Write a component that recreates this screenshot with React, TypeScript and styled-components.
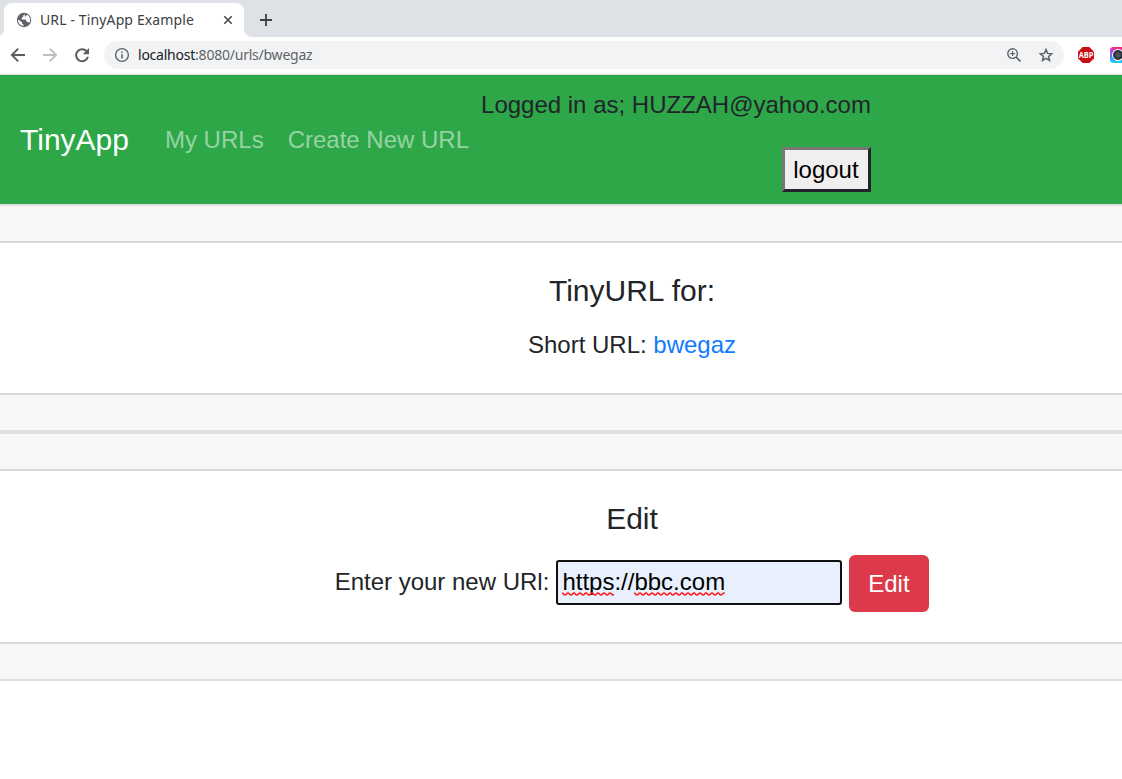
import React from 'react';
import styled, { createGlobalStyle } from 'styled-components';

const GlobalStyle = createGlobalStyle`
  *, *::before, *::after { box-sizing: border-box; }
  html, body { margin: 0; padding: 0; overflow: hidden; background: #fff; }
`;

const Window = styled.div`
  width: 1122px;
  height: 779px;
  overflow: hidden;
  background: #fff;
  color: #212529;
  font: 24px/36px "Liberation Sans", Arial, sans-serif;
`;

const chromeFont = '"Noto Sans", "Open Sans", sans-serif';

const TabStrip = styled.div`
  display: flex;
  height: 37px;
  padding: 3px 0 0 4px;
  background: #dee1e6;
`;

const Tab = styled.div`
  position: relative;
  display: flex;
  align-items: center;
  width: 240px;
  padding: 0 10px 0 12px;
  background: #fff;
  border-radius: 8px 8px 0 0;

  &::before, &::after {
    content: '';
    position: absolute;
    bottom: 0;
    width: 8px;
    height: 8px;
  }
  &::before {
    left: -8px;
    background: radial-gradient(circle at 0 0, transparent 7.5px, #fff 8.5px);
  }
  &::after {
    right: -8px;
    background: radial-gradient(circle at 100% 0, transparent 7.5px, #fff 8.5px);
  }
`;

const TabTitle = styled.span`
  flex: 1;
  margin-left: 8px;
  color: #3c4043;
  font: 14px/20px ${chromeFont};
  letter-spacing: 0.13px;
  white-space: nowrap;
`;

const NewTab = styled.div`
  display: flex;
  align-items: center;
  margin-left: 15px;
`;

const Toolbar = styled.div`
  display: flex;
  align-items: center;
  height: 38px;
  padding: 0 0 1px 10px;
  border-bottom: 1px solid #dadce0;
  background: #fff;
`;

const NavIcons = styled.div`
  display: flex;
  flex: none;
  gap: 16px;
  margin-right: 14px;
`;

const AddressBar = styled.div`
  display: flex;
  flex: none;
  align-items: center;
  width: 960px;
  height: 28px;
  padding: 0 10px;
  border-radius: 14px;
  background: #f1f3f4;
`;

const Address = styled.span`
  flex: 1;
  margin-left: 8px;
  color: #5f6368;
  font: 14px/20px ${chromeFont};
  letter-spacing: -0.23px;
`;

const Host = styled.span`
  color: #202124;
`;

const AddressActions = styled.div`
  display: flex;
  gap: 16px;
`;

const Extensions = styled.div`
  display: flex;
  flex: none;
  gap: 16px;
  margin-left: 14px;
`;

const Icon = styled.svg`
  display: block;
  flex: none;
`;

const Page = styled.div`
  width: 1264px;
`;

const Navbar = styled.nav`
  display: flex;
  align-items: center;
  height: 129px;
  padding: 12px 20px;
  background: #2ea749;
  white-space: nowrap;
`;

const Brand = styled.span`
  margin-right: 24px;
  color: #fff;
  font-size: 30px;
  line-height: 45px;
`;

const NavLink = styled.span`
  padding: 0 12px;
  color: rgba(255, 255, 255, 0.5);
`;

const Account = styled.div`
  display: flex;
  flex-direction: column;
  align-items: flex-end;
  gap: 24px;
  height: 105px;
`;

const LogoutButton = styled.button`
  width: 89px;
  height: 45px;
  padding: 0 1px 0 0;
  border: 3px solid;
  border-color: #767676 #212529 #212529 #767676;
  border-radius: 0;
  background: #efefef;
  color: #000;
  font: inherit;
`;

const Card = styled.section`
  border: solid #dfdfdf;
  border-width: 2px 0;
  background: #fff;
  text-align: center;
`;

const CardBand = styled.div<{ $edge: 'top' | 'bottom' }>`
  height: 37px;
  background: #f7f7f7;
  border-${({ $edge }) => $edge}: 2px solid #d8d8d8;
`;

const CardBody = styled.div<{ $height: number }>`
  height: ${({ $height }) => $height}px;
  padding: 30px;
`;

const CardTitle = styled.h5`
  margin: 0 0 18px;
  font-size: 30px;
  font-weight: 400;
  line-height: 36px;
`;

const CardText = styled.p`
  margin: 0;
`;

const Link = styled.a`
  color: #107bff;
`;

const Form = styled.form`
  display: flex;
  justify-content: center;
`;

const Label = styled.label`
  margin: 9px 7px 0 0;
`;

const UrlField = styled.div`
  width: 286px;
  height: 45px;
  margin: 5px 7px 0 0;
  padding: 2px 4px;
  border: 2px solid #101010;
  border-radius: 3px;
  background: #e8f0fe;
  color: #000;
  text-align: left;
`;

const Misspelled = styled.span`
  position: relative;
`;

const Squiggle = styled.svg`
  position: absolute;
  left: 0;
  bottom: -1px;
  width: 100%;
  height: 4px;
`;

const EditButton = styled.button`
  width: 80px;
  height: 57px;
  padding: 0 1px 0 0;
  border: 0;
  border-radius: 6px;
  background: #dc3a4b;
  color: #fff;
  font: inherit;
`;

function Flagged({ id, children }: { id: string; children: React.ReactNode }) {
  return (
    <Misspelled>
      {children}
      <Squiggle>
        <defs>
          <pattern id={id} width="6" height="4" patternUnits="userSpaceOnUse">
            <path d="M-1.5 2 Q0 -0.2 1.5 2 T4.5 2 T7.5 2" fill="none" stroke="#ff1e1e" strokeWidth="1.5" />
          </pattern>
        </defs>
        <rect width="100%" height="4" fill={`url(#${id})`} />
      </Squiggle>
    </Misspelled>
  );
}

function BrowserBar() {
  return (
    <>
      <TabStrip>
        <Tab>
          <Icon width="16" height="16" viewBox="0 0 16 16">
            <circle cx="8" cy="8" r="7.2" fill="#5f6368" />
            <path d="M8.8 2.2 7.2 3.5v1.3L5.6 6v1.4h3.6l1.4 1.3v1.4h1.5l1.1.8c.6-.9.9-1.8.9-2.9 0-2.4-1.5-4.6-3.6-5.4v.8L9.6 4.4H8.8z" fill="#fff" />
            <path d="M2.1 7.4 6 10.2v1.3l1.4 1v1.4C4.4 13.6 2 11.2 2 8z" fill="#fff" />
          </Icon>
          <TabTitle>URL - TinyApp Example</TabTitle>
          <Icon width="12" height="12" viewBox="0 0 12 12">
            <path d="m2.3 2.3 7.4 7.4m0-7.4-7.4 7.4" stroke="#45494d" strokeWidth="1.6" />
          </Icon>
        </Tab>
        <NewTab>
          <Icon width="14" height="14" viewBox="0 0 14 14">
            <path d="M7 1v12M1 7h12" stroke="#3c4043" strokeWidth="1.8" />
          </Icon>
        </NewTab>
      </TabStrip>
      <Toolbar>
        <NavIcons>
          <Icon width="16" height="16" viewBox="0 0 16 16">
            <path d="M15 8H2.2M8.2 1.7 1.9 8l6.3 6.3" fill="none" stroke="#5a5e63" strokeWidth="1.9" />
          </Icon>
          <Icon width="16" height="16" viewBox="0 0 16 16">
            <path d="M1 8h12.8M7.8 1.7 14.1 8l-6.3 6.3" fill="none" stroke="#bdbfc1" strokeWidth="1.9" />
          </Icon>
          <Icon width="16" height="16" viewBox="0 0 16 16">
            <path d="M12.6 4.2A6 6 0 1 0 13.9 9.7" fill="none" stroke="#5a5e63" strokeWidth="2" />
            <path d="M15 1v6.3H8.7z" fill="#5a5e63" />
          </Icon>
        </NavIcons>
        <AddressBar>
          <Icon width="16" height="16" viewBox="0 0 16 16">
            <circle cx="8" cy="8" r="6.4" fill="none" stroke="#5f6368" strokeWidth="1.4" />
            <path d="M8 7.2v4.2M8 4.4v1.6" stroke="#5f6368" strokeWidth="1.6" />
          </Icon>
          <Address>
            <Host>localhost</Host>:8080/urls/bwegaz
          </Address>
          <AddressActions>
            <Icon width="16" height="16" viewBox="0 0 16 16">
              <circle cx="6.6" cy="6.6" r="4.8" fill="none" stroke="#5f6368" strokeWidth="1.4" />
              <path d="m10.2 10.2 4.3 4.3" stroke="#5f6368" strokeWidth="1.7" />
              <path d="M6.6 4.1v5M4.1 6.6h5" stroke="#5f6368" strokeWidth="1.2" />
            </Icon>
            <Icon width="16" height="16" viewBox="0 0 16 16">
              <path d="m8 2.6 1.6 3.8 4.1.4-3.1 2.7.9 4L8 11.4l-3.500 2.100.9-4L2.300 6.800l4.100-.4z" fill="none" stroke="#5f6368" strokeWidth="1.5" />
            </Icon>
          </AddressActions>
        </AddressBar>
        <Extensions>
          <Icon width="16" height="16" viewBox="0 0 16 16">
            <path d="M4.7 0h6.6L16 4.7v6.6L11.3 16H4.7L0 11.3V4.7z" fill="#c70d12" />
            <text x="8" y="10.8" textAnchor="middle" textLength="14.6" lengthAdjust="spacingAndGlyphs" fill="#fff" fontFamily="Open Sans, sans-serif" fontWeight="700" fontSize="8">ABP</text>
          </Icon>
          <Icon width="16" height="16" viewBox="0 0 16 16">
            <defs>
              <linearGradient id="lens" x1="0.3" y1="0" x2="0.2" y2="1">
                <stop offset="0" stopColor="#f92c74" />
                <stop offset="0.35" stopColor="#b34bf2" />
                <stop offset="0.65" stopColor="#3d8cff" />
                <stop offset="1" stopColor="#16d8ee" />
              </linearGradient>
            </defs>
            <rect width="16" height="16" rx="3.5" fill="url(#lens)" />
            <circle cx="8" cy="8" r="6" fill="#fff" />
            <circle cx="8" cy="8" r="5" fill="#293039" />
            <circle cx="8" cy="8" r="2.8" fill="#46515c" />
          </Icon>
        </Extensions>
      </Toolbar>
    </>
  );
}

export default function App() {
  return (
    <Window>
      <GlobalStyle />
      <BrowserBar />
      <Page>
        <Navbar>
          <Brand>TinyApp</Brand>
          <NavLink>My URLs</NavLink>
          <NavLink>Create New URL</NavLink>
          <Account>
            <span>Logged in as; HUZZAH@yahoo.com</span>
            <LogoutButton>logout</LogoutButton>
          </Account>
        </Navbar>
        <Card>
          <CardBand $edge="bottom" />
          <CardBody $height={150}>
            <CardTitle>TinyURL for:</CardTitle>
            <CardText>
              Short URL: <Link>bwegaz</Link>
            </CardText>
          </CardBody>
          <CardBand $edge="top" />
        </Card>
        <Card>
          <CardBand $edge="bottom" />
          <CardBody $height={171}>
            <CardTitle>Edit</CardTitle>
            <Form>
              <Label>Enter your new URl:</Label>
              <UrlField>
                <Flagged id="wave-a">https</Flagged>://<Flagged id="wave-b">bbc.com</Flagged>
              </UrlField>
              <EditButton type="button">Edit</EditButton>
            </Form>
          </CardBody>
          <CardBand $edge="top" />
        </Card>
      </Page>
    </Window>
  );
}
